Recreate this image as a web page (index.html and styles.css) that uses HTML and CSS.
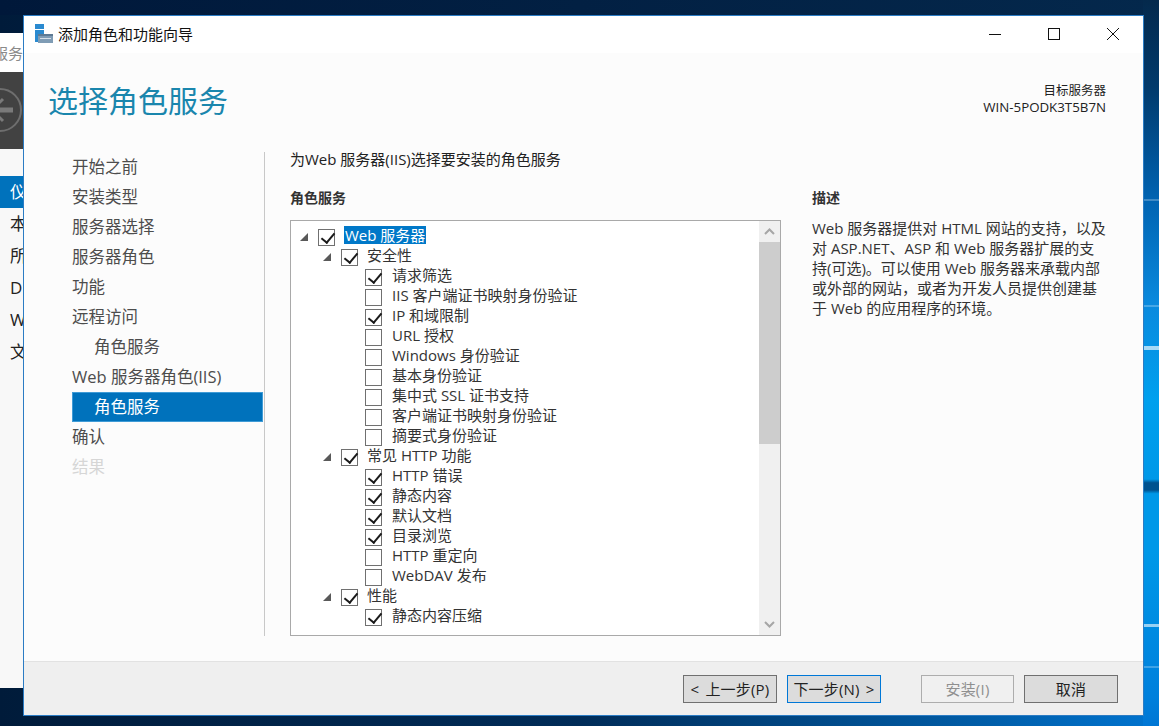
FILE: index.html
```html
<!DOCTYPE html>
<html lang="zh-CN">
<head>
  <meta charset="UTF-8">
  <title>添加角色和功能向导</title>
  <link rel="stylesheet" href="styles.css">
</head>
<body>
  <div class="desktop">
    <span class="streak streak-a"></span>
    <span class="streak streak-b"></span>
    <span class="streak streak-c"></span>
    <span class="streak streak-d"></span>
    <span class="streak streak-e"></span>

    <!-- server manager peeking out behind the wizard -->
    <div class="behind">
      <div class="behind-top">服务</div>
      <div class="behind-band">
        <svg class="back-icon" width="24" height="60" viewBox="0 0 24 60">
          <circle cx="0" cy="31" r="21" fill="none" stroke="#6e6e6e" stroke-width="2"/>
          <path d="M0 31H13" fill="none" stroke="#7a7a7a" stroke-width="5"/>
          <path d="M3 20l-11 11 11 11" fill="none" stroke="#7a7a7a" stroke-width="3"/>
        </svg>
      </div>
      <ul class="behind-list">
        <li class="on">仪</li>
        <li>本</li>
        <li>所</li>
        <li>D</li>
        <li>W</li>
        <li>文</li>
      </ul>
    </div>

    <div class="wizard">
      <div class="titlebar">
        <svg class="app-icon" width="20" height="20" viewBox="0 0 20 20">
          <rect x="1" y="0" width="9" height="5" fill="#2a8ad0"/>
          <rect x="1" y="6" width="9" height="12" fill="#2a8ad0"/>
          <rect x="4" y="10" width="15" height="9" fill="#7f9cb5"/>
          <rect x="4" y="10" width="15" height="2" fill="#5d7a94"/>
          <rect x="6" y="14" width="11" height="1" fill="#d5dfe8"/>
        </svg>
        <span class="title-text">添加角色和功能向导</span>
        <div class="win-btns">
          <svg width="14" height="14" viewBox="0 0 14 14"><path d="M1 7.5H13" stroke="#111" fill="none"/></svg>
          <svg width="14" height="14" viewBox="0 0 14 14"><rect x="1.5" y="1.5" width="11" height="11" stroke="#111" fill="none"/></svg>
          <svg width="14" height="14" viewBox="0 0 14 14"><path d="M1 1L13 13M13 1L1 13" stroke="#111" fill="none"/></svg>
        </div>
      </div>

      <div class="content">
        <div class="head">
          <h1>选择角色服务</h1>
          <div class="target">
            <div>目标服务器</div>
            <div class="server">WIN-5PODK3T5B7N</div>
          </div>
        </div>

        <div class="columns">
          <ul class="nav">
            <li>开始之前</li>
            <li>安装类型</li>
            <li>服务器选择</li>
            <li>服务器角色</li>
            <li>功能</li>
            <li>远程访问</li>
            <li class="sub">角色服务</li>
            <li>Web 服务器角色(IIS)</li>
            <li class="sub active">角色服务</li>
            <li>确认</li>
            <li class="off">结果</li>
          </ul>

          <div class="main">
            <p class="lead">为Web 服务器(IIS)选择要安装的角色服务</p>
            <div class="panes">
              <div class="services">
                <h2>角色服务</h2>
                <div class="tree-box">
                  <div class="tree">
                    <div class="row l0"><i class="arrow"></i><b class="box on"></b><span class="sel">Web 服务器</span></div>
                    <div class="row l1"><i class="arrow"></i><b class="box on"></b><span>安全性</span></div>
                    <div class="row l2"><b class="box on"></b><span>请求筛选</span></div>
                    <div class="row l2"><b class="box"></b><span>IIS 客户端证书映射身份验证</span></div>
                    <div class="row l2"><b class="box on"></b><span>IP 和域限制</span></div>
                    <div class="row l2"><b class="box"></b><span>URL 授权</span></div>
                    <div class="row l2"><b class="box"></b><span>Windows 身份验证</span></div>
                    <div class="row l2"><b class="box"></b><span>基本身份验证</span></div>
                    <div class="row l2"><b class="box"></b><span>集中式 SSL 证书支持</span></div>
                    <div class="row l2"><b class="box"></b><span>客户端证书映射身份验证</span></div>
                    <div class="row l2"><b class="box"></b><span>摘要式身份验证</span></div>
                    <div class="row l1"><i class="arrow"></i><b class="box on"></b><span>常见 HTTP 功能</span></div>
                    <div class="row l2"><b class="box on"></b><span>HTTP 错误</span></div>
                    <div class="row l2"><b class="box on"></b><span>静态内容</span></div>
                    <div class="row l2"><b class="box on"></b><span>默认文档</span></div>
                    <div class="row l2"><b class="box on"></b><span>目录浏览</span></div>
                    <div class="row l2"><b class="box"></b><span>HTTP 重定向</span></div>
                    <div class="row l2"><b class="box"></b><span>WebDAV 发布</span></div>
                    <div class="row l1"><i class="arrow"></i><b class="box on"></b><span>性能</span></div>
                    <div class="row l2"><b class="box on"></b><span>静态内容压缩</span></div>
                  </div>
                  <div class="scrollbar">
                    <svg width="21" height="21" viewBox="0 0 21 21"><path d="M6 13l4.500-4.500L15 13" fill="none" stroke="#a6a6a6" stroke-width="2"/></svg>
                    <div class="track"><div class="thumb"></div></div>
                    <svg width="21" height="21" viewBox="0 0 21 21"><path d="M6 8l4.500 4.500L15 8" fill="none" stroke="#a6a6a6" stroke-width="2"/></svg>
                  </div>
                </div>
              </div>
              <div class="desc">
                <h2>描述</h2>
                <p>Web 服务器提供对 HTML 网站的支持，以及对 ASP.NET、ASP 和 Web 服务器扩展的支持(可选)。可以使用 Web 服务器来承载内部或外部的网站，或者为开发人员提供创建基于 Web 的应用程序的环境。</p>
              </div>
            </div>
          </div>
        </div>
      </div>

      <div class="footer">
        <button class="btn">&lt; 上一步(P)</button>
        <button class="btn focus">下一步(N) &gt;</button>
        <button class="btn disabled">安装(I)</button>
        <button class="btn">取消</button>
      </div>
    </div>
  </div>
</body>
</html>
```

FILE: styles.css
```css
* {
  box-sizing: border-box;
}
html, body {
  margin: 0;
  height: 100%;
  overflow: hidden;
}
body {
  font-family: "Open Sans", "Noto Sans CJK SC", sans-serif;
  font-size: 15px;
  color: #222;
}
ul {
  list-style: none;
  margin: 0;
  padding: 0;
}
h1, h2, p {
  margin: 0;
  font-weight: normal;
}

/* desktop */
.desktop {
  position: relative;
  width: 1159px;
  height: 726px;
  overflow: hidden;
  background:
    linear-gradient(180deg, #04294c 0%, #013a6c 12%, #0062b0 27%, #0a8ade 42%, #00a0ee 55%, #0098e8 66%, #00528f 66.500%, #00528f 67.500%, #0098e8 68%, #0098e8 76%, #0080dc 96%, #0076d4 100%) right top / 16px 100% no-repeat,
    linear-gradient(90deg, #00183a 0%, #04284c 100%) left top / 100% 15px no-repeat,
    linear-gradient(90deg, #001b3a 0%, #002c58 50%, #005da8 85%, #0074d0 100%);
}
.streak {
  position: absolute;
  left: 1144px;
  width: 15px;
  height: 2px;
  background: rgba(255, 255, 255, 0.25);
}
.streak-a {
  top: 624px;
  height: 3px;
  background: rgba(255, 255, 255, 0.6);
}
.streak-b {
  top: 666px;
}
.streak-c {
  top: 199px;
}
.streak-d {
  top: 305px;
}
.streak-e {
  top: 346px;
  height: 4px;
  background: rgba(255, 255, 255, 0.65);
}

/* window behind the wizard */
.behind {
  position: absolute;
  left: 0;
  top: 33px;
  width: 24px;
  height: 655px;
  background: #f8f8f8;
}
.behind-top {
  height: 39px;
  padding-top: 10px;
  background: #fff;
  color: #8a8a8a;
  font-size: 15px;
  line-height: 20px;
  white-space: nowrap;
  text-indent: -7px;
  overflow: hidden;
}
.behind-band {
  height: 77px;
  background: #424242;
  overflow: hidden;
}
.back-icon {
  display: block;
  margin-top: 7px;
}
.behind-list {
  margin-top: 27px;
  overflow: hidden;
}
.behind-list li {
  height: 32px;
  padding-left: 10px;
  font-size: 17px;
  line-height: 32px;
  white-space: nowrap;
}
.behind-list li.on {
  background: #0072bc;
  color: #fff;
}

/* wizard window */
.wizard {
  position: absolute;
  left: 23px;
  top: 15px;
  width: 1121px;
  height: 701px;
  border: 1px solid #2b7cc4;
  background: #fcfcfc;
  display: flex;
  flex-direction: column;
}
.titlebar {
  height: 37px;
  flex: none;
  background: #fff;
  display: flex;
  align-items: center;
  padding: 0 0 2px 10px;
}
.app-icon {
  flex: none;
  margin-right: 4px;
}
.title-text {
  color: #111;
  font-size: 15px;
}
.win-btns {
  margin-left: auto;
  display: flex;
  gap: 45px;
  padding-right: 23px;
}
.win-btns svg {
  display: block;
}

.content {
  flex: 1;
  min-height: 0;
}
.head {
  height: 99px;
  display: flex;
  justify-content: space-between;
  padding: 28px 37px 0 24px;
}
.head h1 {
  font-size: 30px;
  line-height: 40px;
  color: #1a86ad;
}
.target {
  margin-top: 1px;
  text-align: right;
  font-size: 12.500px;
  line-height: 17px;
  color: #222;
}
.target .server {
  font-size: 13.300px;
  line-height: 16px;
}

.columns {
  display: flex;
}
.nav {
  flex: none;
  width: 192px;
  height: 484px;
  margin-left: 48px;
  border-right: 1px solid transparent;
}
.nav li {
  height: 30px;
  line-height: 30px;
  font-size: 16.500px;
  color: #4d4d4d;
  white-space: nowrap;
}
.nav li.sub {
  padding-left: 22px;
}
.nav li.active {
  background: #0072bc;
  border: 1px solid #3f9bd6;
  padding-left: 21px;
  line-height: 28px;
  color: #fff;
}
.nav li.off {
  color: #d6d6d6;
}

.main {
  border-left: 1px solid #c8c8c8;
  height: 484px;
  padding-left: 25px;
  width: 850px;
}
.lead {
  line-height: 20px;
  margin-top: -3px;
}
.panes {
  display: flex;
  margin-top: 19px;
}
.services {
  width: 491px;
  flex: none;
}
h2 {
  font-size: 14px;
  font-weight: bold;
  line-height: 20px;
  color: #333;
}
.tree-box {
  margin-top: 12px;
  width: 491px;
  height: 416px;
  border: 1px solid #a9a9a9;
  background: #fff;
  display: flex;
  overflow: hidden;
}
.tree {
  flex: 1;
  padding-top: 6px;
  overflow: hidden;
}
.row {
  height: 20px;
  display: flex;
  align-items: center;
  white-space: nowrap;
  color: #333;
  line-height: 18px;
}
.row span {
  margin-bottom: 4px;
}
.row.l0 {
  padding-left: 9px;
}
.row.l1 {
  padding-left: 32px;
}
.row.l2 {
  padding-left: 74px;
}
.arrow {
  flex: none;
  width: 0;
  height: 0;
  margin-right: 10px;
  border-style: solid;
  border-width: 0 0 8px 8px;
  border-color: transparent transparent #595959 transparent;
}
.box {
  flex: none;
  position: relative;
  width: 17px;
  height: 17px;
  border: 1px solid #707070;
  background: #fff;
  margin-right: 10px;
}
.box.on::after {
  content: "";
  position: absolute;
  left: 5px;
  top: 0;
  width: 6px;
  height: 11px;
  border: solid #1a1a1a;
  border-width: 0 2px 2px 0;
  transform: rotate(40deg);
}
.l0 .box {
  margin-right: 9px;
}
.l1 .box {
  margin-right: 9px;
}
.row .sel {
  background: #0078c8;
  color: #fff;
  padding: 0 1px;
}
.scrollbar {
  flex: none;
  width: 21px;
  display: flex;
  flex-direction: column;
  background: #f0f0f0;
}
.scrollbar svg {
  display: block;
  flex: none;
}
.track {
  flex: 1;
}
.thumb {
  height: 202px;
  background: #cdcdcd;
}
.desc {
  margin-left: 31px;
  width: 295px;
}
.desc p {
  margin-top: 10px;
  line-height: 20px;
  color: #333;
}

/* footer buttons */
.footer {
  height: 54px;
  flex: none;
  background: #efefef;
  border-top: 1px solid #e2e2e2;
  display: flex;
  align-items: flex-start;
  padding: 13px 25px 0 659px;
}
.btn {
  width: 94px;
  height: 28px;
  padding: 0;
  margin-right: 10px;
  font-family: inherit;
  font-size: 15px;
  line-height: 24px;
  word-spacing: 2px;
  letter-spacing: 0.2px;
  color: #222;
  background: #dcdcdc;
  border: 1px solid #707070;
  white-space: nowrap;
}
.btn.focus {
  border-color: #0078d7;
  margin-right: 40px;
}
.btn.disabled {
  width: 93px;
  margin-right: 10px;
  background: #f0f0f0;
  border-color: #adadad;
  color: #8f8f8f;
}
.btn:last-child {
  margin-right: 0;
}
```
